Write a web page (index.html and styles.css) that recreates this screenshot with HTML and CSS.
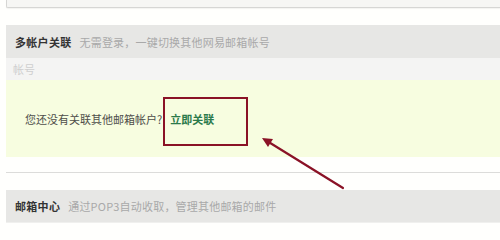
FILE: index.html
```html
<!DOCTYPE html>
<html lang="zh-CN">
<head>
<meta charset="utf-8">
<link rel="stylesheet" href="styles.css">
</head>
<body>
<div class="page">
  <div class="topbox"></div>

  <section class="panel">
    <div class="panel-head">
      <span class="title">多帐户关联</span>
      <span class="desc">无需登录，一键切换其他网易邮箱帐号</span>
    </div>
    <div class="col-row">帐号</div>
    <div class="empty">
      <span class="msg">您还没有关联其他邮箱帐户?</span>
      <a class="link" href="#">立即关联</a>
      <div class="mark"></div>
      <svg class="arrow" width="100" height="60" viewBox="0 0 100 60">
        <line x1="86" y1="56" x2="10" y2="9" stroke="#8a1226" stroke-width="2.2" stroke-linecap="round"/>
        <polygon points="5,6 16,7 11,15" fill="#8a1226"/>
      </svg>
    </div>
  </section>

  <div class="divider"></div>

  <section class="panel">
    <div class="panel-head">
      <span class="title">邮箱中心</span>
      <span class="desc">通过POP3自动收取，管理其他邮箱的邮件</span>
    </div>
  </section>
</div>
</body>
</html>
```
FILE: styles.css
```css
html, body {
  margin: 0;
  padding: 0;
  background: #fffffd;
}
body {
  font-family: "Noto Sans CJK SC", "Noto Sans", sans-serif;
  font-size: 11px;
  overflow: hidden;
  height: 224px;
}
.page {
  padding-left: 6px;
}
.topbox {
  height: 7px;
  background: #f6f6f4;
  border: 1px solid #d6d6d4;
  border-top: none;
  border-right: none;
  border-bottom-left-radius: 2px;
  box-shadow: 0 1px 1px rgba(0,0,0,0.05);
}
.panel {
  margin-top: 17px;
}
.panel-head {
  height: 33px;
  background: #e7e7e5;
  display: flex;
  align-items: center;
  padding-left: 9px;
  gap: 8px;
}
.title {
  font-weight: bold;
  color: #333;
  letter-spacing: 0.3px;
}
.desc {
  color: #a9a9a9;
  letter-spacing: 0.2px;
}
.col-row {
  height: 22px;
  background: #f4f4f3;
  color: #cfcfcf;
  padding-left: 7px;
  display: flex;
  align-items: center;
}
.empty {
  position: relative;
  height: 77px;
  background: #f7fde0;
  display: flex;
  align-items: center;
  padding-left: 19px;
}
.msg {
  color: #4e4e4a;
}
.link {
  color: #2b7a4b;
  font-weight: bold;
  text-decoration: none;
  margin-left: 8px;
}
.mark {
  position: absolute;
  left: 157px;
  top: 17px;
  width: 81px;
  height: 45px;
  border: 2px solid #8a1226;
}
.arrow {
  position: absolute;
  left: 251px;
  top: 52px;
}
.divider {
  margin-top: 15px;
  height: 1px;
  background: #dcdcda;
}
.divider + .panel {
  margin-top: 17px;
}
.divider + .panel .panel-head {
  height: 32px;
  border-bottom: 1px solid #f0f0ee;
}
```
